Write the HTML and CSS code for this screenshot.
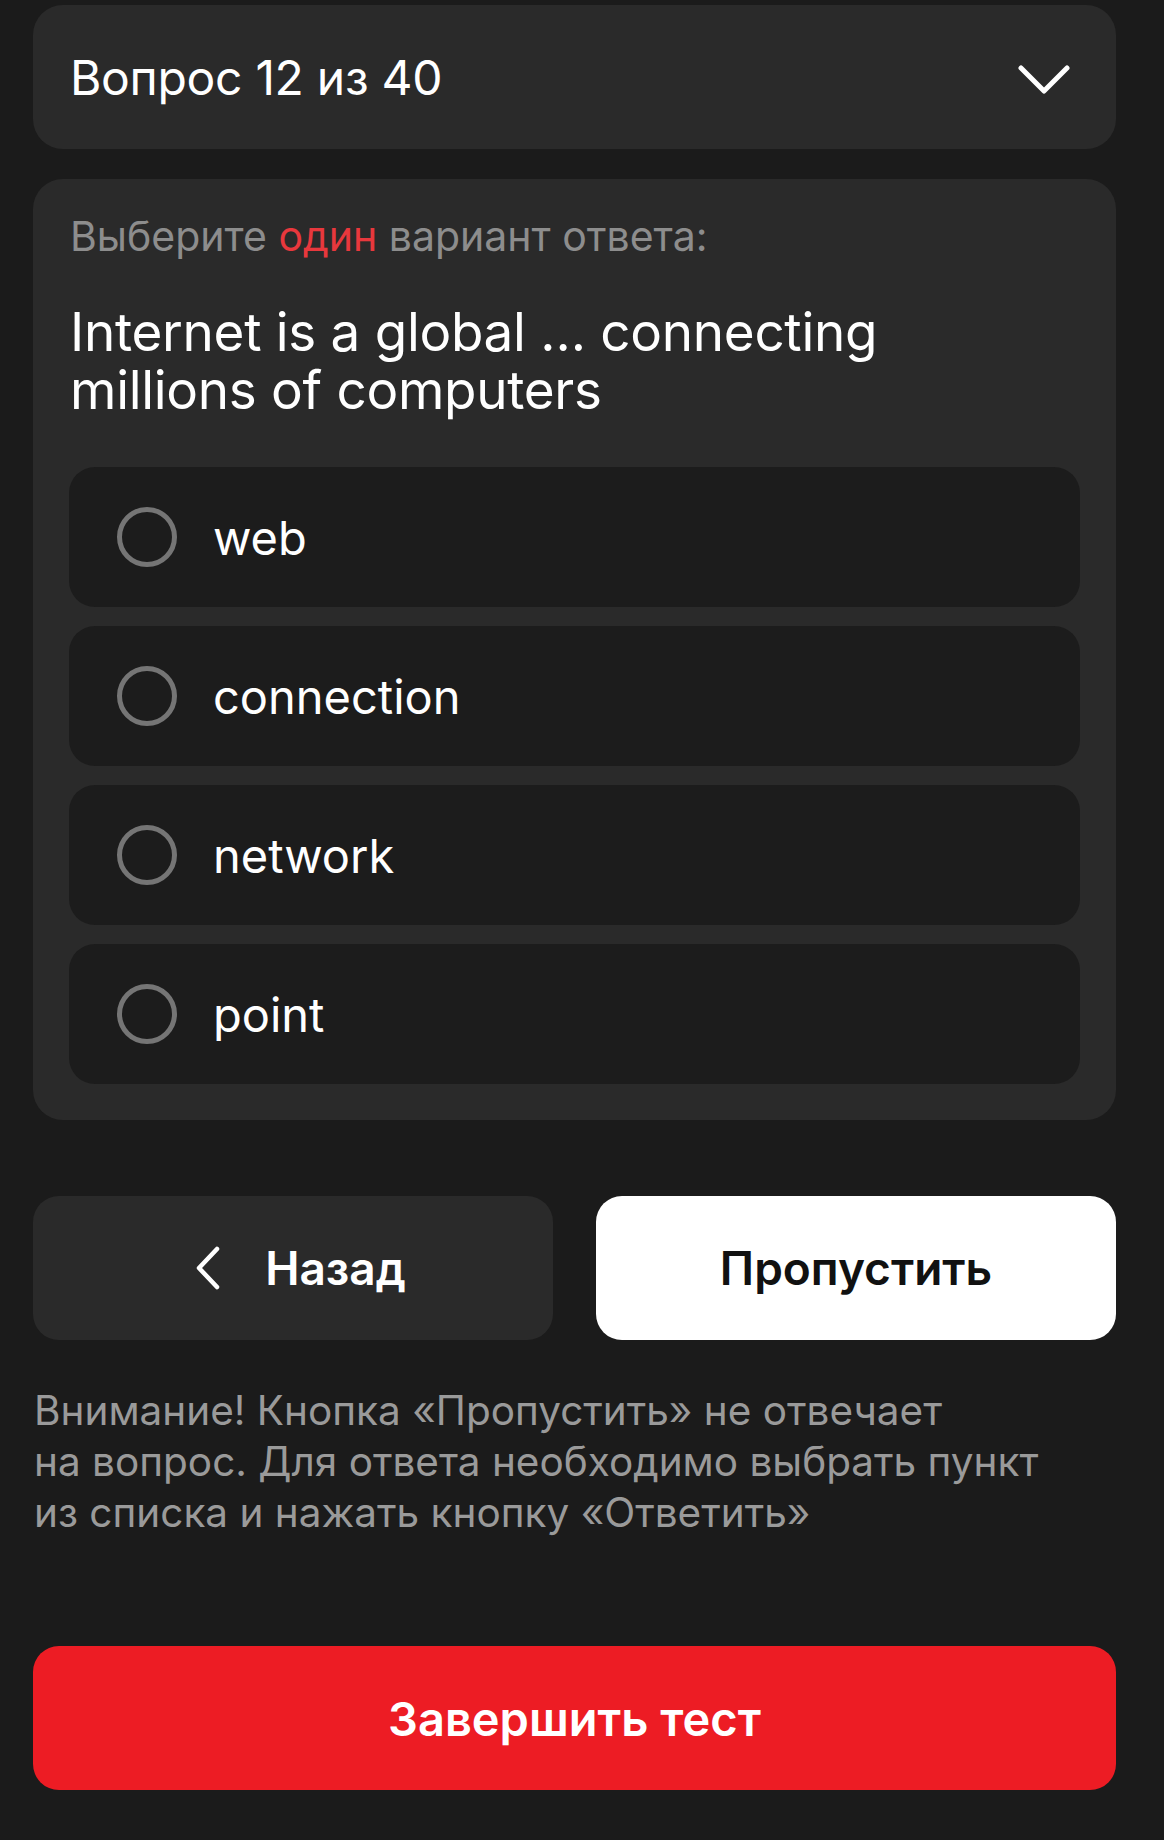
FILE: index.html
```html
<!DOCTYPE html>
<html lang="ru">
<head>
<meta charset="utf-8">
<title>Вопрос 12 из 40</title>
<link rel="stylesheet" href="styles.css">
</head>
<body>
<div class="page">
  <div class="header-card">
    <span class="header-title">Вопрос 12 из 40</span>
    <svg class="chev-down" width="52" height="30" viewBox="0 0 52 30" aria-hidden="true">
      <polyline points="3,3 26,26 49,3" fill="none" stroke="#ffffff" stroke-width="5" stroke-linecap="round" stroke-linejoin="round"/>
    </svg>
  </div>

  <div class="question-card">
    <p class="hint">Выберите <span class="accent">один</span> вариант ответа:</p>
    <h1 class="question"><span class="q-line">Internet is a global … connecting</span><span class="q-line">millions of computers</span></h1>
    <ul class="options">
      <li class="option"><span class="radio"></span><span class="option-text">web</span></li>
      <li class="option"><span class="radio"></span><span class="option-text">connection</span></li>
      <li class="option"><span class="radio"></span><span class="option-text">network</span></li>
      <li class="option"><span class="radio"></span><span class="option-text">point</span></li>
    </ul>
  </div>

  <div class="actions">
    <button class="btn btn-back" type="button">
      <svg class="chev-left" width="26" height="44" viewBox="0 0 26 44" aria-hidden="true">
        <polyline points="22,3 4,22 22,41" fill="none" stroke="#ffffff" stroke-width="4.5" stroke-linecap="round" stroke-linejoin="round"/>
      </svg>
      <span>Назад</span>
    </button>
    <button class="btn btn-skip" type="button">Пропустить</button>
  </div>

  <p class="notice">Внимание! Кнопка «Пропустить» не отвечает<br>на вопрос. Для ответа необходимо выбрать пункт<br>из списка и нажать кнопку «Ответить»</p>

  <button class="btn btn-finish" type="button">Завершить тест</button>
</div>
</body>
</html>
```

FILE: styles.css
```css
* {
  box-sizing: border-box;
}

html, body {
  margin: 0;
  padding: 0;
  background: #1b1b1b;
}

body {
  font-family: Inter, "Noto Sans", "DejaVu Sans", sans-serif;
  color: #ffffff;
}

.page {
  width: 1164px;
  min-height: 1840px;
  padding: 5px 48px 0 33px;
  display: flex;
  flex-direction: column;
}

.header-card {
  height: 144px;
  background: #2a2a2a;
  border-radius: 30px;
  display: flex;
  align-items: center;
  justify-content: space-between;
  padding: 0 46px 0 37px;
}

.header-title {
  font-size: 48px;
  font-weight: 400;
  letter-spacing: -0.3px;
}

.chev-down {
  display: block;
  margin-top: 6px;
}

.question-card {
  margin-top: 30px;
  background: #2a2a2a;
  border-radius: 30px;
  padding: 33px 36px 36px 36px;
}

.hint {
  margin: 0 0 0 1px;
  font-size: 41px;
  line-height: 48px;
  color: #8d8d8d;
  font-weight: 400;
}

.accent {
  color: #e8383d;
}

.question {
  margin: 43px 0 48px 1px;
  font-size: 53px;
  line-height: 58px;
  font-weight: 400;
  letter-spacing: -0.3px;
  display: flex;
  flex-direction: column;
}

.q-line {
  display: block;
  height: 58px;
}

.options {
  list-style: none;
  margin: 0;
  padding: 0;
  display: flex;
  flex-direction: column;
  gap: 19px;
}

.option {
  height: 140px;
  background: #1c1c1c;
  border-radius: 26px;
  display: flex;
  align-items: center;
  padding-left: 48px;
}

.radio {
  width: 60px;
  height: 60px;
  border-radius: 50%;
  border: 5px solid #757575;
  flex-shrink: 0;
}

.option-text {
  margin-left: 36px;
  font-size: 47px;
  font-weight: 400;
}

.actions {
  margin-top: 76px;
  display: grid;
  grid-template-columns: 1fr 1fr;
  gap: 43px;
}

.btn {
  border: none;
  height: 144px;
  border-radius: 26px;
  font-family: inherit;
  font-size: 46px;
  font-weight: 600;
  display: flex;
  align-items: center;
  justify-content: center;
  cursor: pointer;
}

.btn-back {
  background: #2a2a2a;
  color: #ffffff;
  gap: 44px;
  padding-left: 21px;
}

.chev-left {
  display: block;
}

.btn-skip {
  background: #ffffff;
  color: #111111;
}

.notice {
  margin: 45px 0 0 1px;
  font-size: 40.5px;
  line-height: 51px;
  color: #9a9a9a;
  font-weight: 400;
}

.btn-finish {
  margin-top: 108px;
  width: 100%;
  background: #ed1c24;
  color: #ffffff;
  font-size: 47px;
}
```
